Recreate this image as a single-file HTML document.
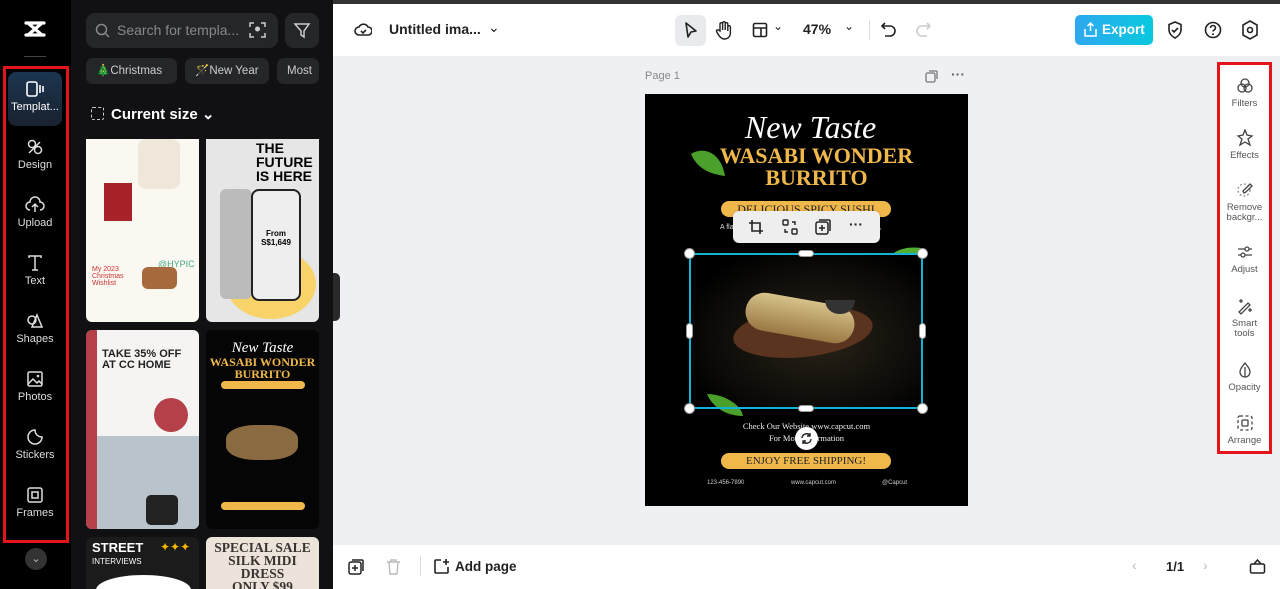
<!DOCTYPE html>
<html style="overflow:hidden;width:1280px;height:589px"><head><meta charset="utf-8"><style>
*{margin:0;padding:0;box-sizing:border-box}
body{width:1280px;height:589px;overflow:hidden;font-family:"Liberation Sans",sans-serif;background:#eef0f3;position:relative}
.abs{position:absolute}
.rail{left:0;top:0;width:71px;height:589px;background:#000}
.panel{left:71px;top:0;width:262px;height:589px;background:#111113}
.topline{left:0;top:0;width:1280px;height:4px;background:#333}
.ri{position:absolute;left:8px;width:54px;height:54px;text-align:center;color:#ddd;font-size:11px}
.ri svg{display:block;margin:8px auto 3px}
.chip{position:absolute;top:58px;height:26px;background:#25262a;border-radius:7px;color:#ccc;font-size:11.5px;line-height:26px;padding:0 10px;white-space:nowrap;overflow:hidden}
.thumb{position:absolute;border-radius:6px;overflow:hidden}
.tb{left:333px;top:4px;width:947px;height:52px;background:#fff}
.bb{left:333px;top:545px;width:947px;height:44px;background:#fff}
.rp{left:1217px;top:62px;width:55px;height:392px;background:#fff;border:3px solid #e4141b}
.rpi{position:absolute;left:0;width:49px;text-align:center;font-size:9.5px;color:#555;line-height:10px}
.rpi svg{display:block;margin:0 auto 4px}
.page{left:645px;top:94px;width:323px;height:412px;background:#000;overflow:hidden}
.gold{color:#f0b84a;font-family:"Liberation Serif",serif;font-weight:bold;text-align:center;position:absolute;width:100%}
.pill{position:absolute;background:#f0b84a;border-radius:9px;color:#222;font-family:"Liberation Serif",serif;text-align:center}
.h{position:absolute;background:#fff;border:1px solid #999}
</style></head><body>
<div class="abs topline"></div>
<div class="abs rail"></div>
<div class="abs panel"></div>
<svg class="abs" style="left:22px;top:18px" width="26" height="22" viewBox="0 0 26 22"><path d="M4 5h18M4 17h18M6 5l14 12M20 5L6 17" stroke="#fff" stroke-width="3.2" fill="none" stroke-linecap="round"/></svg>
<div class="abs" style="left:24px;top:56px;width:22px;height:1px;background:#444"></div>
<div class="abs" style="left:3px;top:66px;width:66px;height:477px;border:3px solid #e4141b"></div>
<div class="ri" style="top:72px;background:linear-gradient(#1b3550,#1a2230);border-radius:8px;color:#fff;height:54px"><svg width="20" height="18" viewBox="0 0 20 18"><rect x="2" y="2" width="10" height="14" rx="2" stroke="#fff" stroke-width="1.6" fill="none"/><path d="M15 5v8M18 6v6" stroke="#fff" stroke-width="1.6"/></svg>Templat...</div>
<div class="ri" style="top:130px"><svg width="18" height="18" viewBox="0 0 18 18"><circle cx="6" cy="6" r="3.5" stroke="#ddd" stroke-width="1.5" fill="none"/><circle cx="12" cy="12" r="3.5" stroke="#ddd" stroke-width="1.5" fill="none"/><path d="M3 15l11-11" stroke="#ddd" stroke-width="1.5"/></svg>Design</div>
<div class="ri" style="top:188px"><svg width="20" height="18" viewBox="0 0 20 18"><path d="M5 14a4 4 0 010-8 5 5 0 0110 0 4 4 0 010 8M10 9v7M7 11l3-3 3 3" stroke="#ddd" stroke-width="1.5" fill="none"/></svg>Upload</div>
<div class="ri" style="top:246px"><svg width="18" height="18" viewBox="0 0 18 18"><path d="M3 4V2h12v2M9 2v14M6 16h6" stroke="#ddd" stroke-width="1.5" fill="none"/></svg>Text</div>
<div class="ri" style="top:304px"><svg width="18" height="18" viewBox="0 0 18 18"><circle cx="6" cy="8" r="4" stroke="#ddd" stroke-width="1.5" fill="none"/><path d="M11 3l5 12H6z" stroke="#ddd" stroke-width="1.5" fill="none"/></svg>Shapes</div>
<div class="ri" style="top:362px"><svg width="18" height="18" viewBox="0 0 18 18"><rect x="2" y="2" width="14" height="14" rx="1.5" stroke="#ddd" stroke-width="1.5" fill="none"/><path d="M2 14l5-5 4 4 2-2 3 3" stroke="#ddd" stroke-width="1.5" fill="none"/><circle cx="12" cy="6" r="1.3" fill="#ddd"/></svg>Photos</div>
<div class="ri" style="top:420px"><svg width="18" height="18" viewBox="0 0 18 18"><path d="M16 9a7 7 0 11-7-7c0 4 3 7 7 7z" stroke="#ddd" stroke-width="1.5" fill="none"/></svg>Stickers</div>
<div class="ri" style="top:478px"><svg width="18" height="18" viewBox="0 0 18 18"><rect x="2" y="2" width="14" height="14" rx="2" stroke="#ddd" stroke-width="1.5" fill="none"/><rect x="6" y="6" width="6" height="6" stroke="#ddd" stroke-width="1.5" fill="none"/></svg>Frames</div>
<div class="abs" style="left:25px;top:548px;width:22px;height:22px;border-radius:50%;background:#333;color:#bbb;font-size:11px;text-align:center;line-height:22px">⌄</div>
<div class="abs" style="left:86px;top:13px;width:192px;height:35px;background:#25262a;border-radius:9px;color:#888;font-size:14px;line-height:35px;padding-left:31px">Search for templa...</div>
<svg class="abs" style="left:95px;top:23px" width="15" height="15"><circle cx="6.5" cy="6.5" r="5" stroke="#888" stroke-width="1.5" fill="none"/><path d="M10 10l4 4" stroke="#888" stroke-width="1.5"/></svg>
<svg class="abs" style="left:249px;top:22px" width="17" height="16"><path d="M1 5V1h4M12 1h4v4M16 11v4h-4M5 15H1v-4" stroke="#ccc" stroke-width="1.5" fill="none"/><circle cx="8.5" cy="7" r="2.5" fill="#ccc"/></svg>
<div class="abs" style="left:285px;top:13px;width:34px;height:35px;background:#25262a;border-radius:9px"></div>
<svg class="abs" style="left:293px;top:22px" width="18" height="17"><path d="M2 2h14l-5 7v6l-3-2V9z" stroke="#ccc" stroke-width="1.5" fill="none"/></svg>
<div class="chip" style="left:86px;width:91px">🎄Christmas</div>
<div class="chip" style="left:185px;width:84px">🪄New Year</div>
<div class="chip" style="left:277px;width:42px">Most</div>
<div class="abs" style="left:91px;top:107px;width:13px;height:13px;border:1.5px dashed #ccc;border-radius:2px"></div>
<div class="abs" style="left:111px;top:105px;color:#fff;font-size:15px;font-weight:bold">Current size ⌄</div>
<div class="thumb" style="left:86px;top:139px;width:113px;height:183px;background:#fbf8f1;border-radius:0 0 6px 6px">
 <div class="abs" style="left:52px;top:0;width:42px;height:50px;background:#efe8da;border-radius:8px"></div>
 <div class="abs" style="left:18px;top:44px;width:28px;height:38px;background:#a8222a"></div>
 <div class="abs" style="left:72px;top:120px;color:#4a8;font-size:9px">@HYPIC</div>
 <div class="abs" style="left:6px;top:127px;color:#c33;font-size:7px;width:40px">My 2023 Christmas Wishlist</div>
 <div class="abs" style="left:56px;top:128px;width:35px;height:22px;background:#a66a3c;border-radius:6px"></div>
</div>
<div class="thumb" style="left:206px;top:139px;width:113px;height:183px;background:#e6e6e6;border-radius:0 0 6px 6px">
 <div class="abs" style="left:50px;top:2px;color:#000;font-size:14px;font-weight:900;line-height:14px">THE<br>FUTURE<br>IS HERE</div>
 <div class="abs" style="left:20px;top:110px;width:90px;height:70px;border-radius:50%;background:#f7d36a"></div>
 <div class="abs" style="left:14px;top:50px;width:32px;height:110px;background:#bbb;border-radius:6px"></div>
 <div class="abs" style="left:45px;top:50px;width:50px;height:112px;background:#eee;border:2px solid #222;border-radius:8px;font-size:8px;font-weight:bold;text-align:center;padding-top:38px">From<br>S$1,649</div>
</div>
<div class="thumb" style="left:86px;top:330px;width:113px;height:199px;background:#f6f4f2">
 <div class="abs" style="left:0;top:0;width:11px;height:199px;background:#b5404a"></div>
 <div class="abs" style="left:11px;top:106px;width:102px;height:93px;background:#b9c3cc"></div>
 <div class="abs" style="left:16px;top:19px;font-size:11px;font-weight:900;color:#222;line-height:11px">TAKE 35% OFF<br>AT CC HOME</div>
 <div class="abs" style="left:68px;top:68px;width:34px;height:34px;border-radius:50%;background:#b5404a"></div>
 <div class="abs" style="left:60px;top:165px;width:32px;height:30px;background:#222;border-radius:5px"></div>
</div>
<div class="thumb" style="left:206px;top:330px;width:113px;height:199px;background:#050505">
 <div class="abs" style="top:10px;width:100%;text-align:center;color:#fff;font-family:'Liberation Serif',serif;font-style:italic;font-size:15px">New Taste</div>
 <div class="gold" style="top:26px;font-size:12px;line-height:12px">WASABI WONDER<br>BURRITO</div>
 <div class="pill" style="left:15px;top:51px;width:84px;height:8px"></div>
 <div class="abs" style="left:20px;top:95px;width:72px;height:35px;border-radius:40%;background:#8a6a40"></div>
 <div class="pill" style="left:15px;top:172px;width:84px;height:8px"></div>
</div>
<div class="thumb" style="left:86px;top:537px;width:113px;height:52px;background:#1b1b1b;border-radius:6px 6px 0 0">
 <div class="abs" style="left:6px;top:5px;color:#fff;font-weight:900;font-size:13px;line-height:12px">STREET<br><span style="font-size:8px;font-weight:normal">INTERVIEWS</span></div>
 <div class="abs" style="left:74px;top:3px;color:#f5b800;font-size:12px">✦✦✦</div>
 <div class="abs" style="left:10px;top:38px;width:95px;height:30px;background:#fff;border-radius:50%"></div>
</div>
<div class="thumb" style="left:206px;top:537px;width:113px;height:52px;background:#ece3da;border-radius:6px 6px 0 0">
 <div class="abs" style="top:4px;width:100%;text-align:center;font-family:'Liberation Serif',serif;font-weight:bold;font-size:13.5px;line-height:13px;color:#3a3330">SPECIAL SALE<br>SILK MIDI DRESS<br>ONLY $99</div>
</div>
<div class="abs" style="left:333px;top:273px;width:7px;height:48px;background:#2a2a2a;border-radius:0 5px 5px 0"></div>
<div class="abs tb"></div>
<svg class="abs" style="left:354px;top:21px" width="18" height="17"><path d="M5 14a4 4 0 010-8 5 5 0 019 0 4 4 0 010 8z" stroke="#222" stroke-width="1.6" fill="none"/><path d="M7 10l2 2 3-3" stroke="#222" stroke-width="1.6" fill="none"/></svg>
<div class="abs" style="left:389px;top:21px;font-size:14px;font-weight:bold;color:#222">Untitled ima...</div>
<div class="abs" style="left:488px;top:19px;font-size:14px;color:#222">⌄</div>
<div class="abs" style="left:675px;top:15px;width:31px;height:31px;background:#e8eaee;border-radius:6px"></div>
<svg class="abs" style="left:683px;top:21px" width="16" height="18"><path d="M3 2l10 8-5 1-3 5z" stroke="#222" stroke-width="1.6" fill="none" stroke-linejoin="round"/></svg>
<svg class="abs" style="left:715px;top:20px" width="18" height="20"><path d="M5 11V4a1.3 1.3 0 012.6 0v6V3a1.3 1.3 0 012.6 0v7V4a1.3 1.3 0 012.6 0v7-4a1.3 1.3 0 012.6 0v6c0 4-3 6-6 6s-5-2-7-6l-1-2a1.3 1.3 0 012-1z" stroke="#222" stroke-width="1.4" fill="none"/></svg>
<svg class="abs" style="left:752px;top:22px" width="16" height="16"><rect x="1.5" y="1.5" width="13" height="13" rx="1.5" stroke="#222" stroke-width="1.6" fill="none"/><path d="M1.5 6h13M9 6v8.5" stroke="#222" stroke-width="1.6"/></svg>
<div class="abs" style="left:773px;top:19px;font-size:12px;color:#222">⌄</div>
<div class="abs" style="left:803px;top:21px;font-size:14px;font-weight:bold;color:#222">47%</div>
<div class="abs" style="left:844px;top:19px;font-size:12px;color:#222">⌄</div>
<div class="abs" style="left:869px;top:20px;width:1px;height:20px;background:#ddd"></div>
<svg class="abs" style="left:881px;top:21px" width="16" height="17"><path d="M4 2L1 5l3 3M1 5h8a5 5 0 010 10H4" stroke="#222" stroke-width="1.6" fill="none"/></svg>
<svg class="abs" style="left:915px;top:21px" width="16" height="17"><path d="M12 2l3 3-3 3M15 5H7a5 5 0 000 10h5" stroke="#ccc" stroke-width="1.6" fill="none"/></svg>
<div class="abs" style="left:1075px;top:15px;width:78px;height:30px;border-radius:5px;background:linear-gradient(90deg,#2fa8f0,#08c9de);color:#fff;font-size:13.5px;font-weight:bold;line-height:30px;padding-left:27px">Export</div>
<svg class="abs" style="left:1084px;top:22px" width="13" height="15"><path d="M6.5 9V1M3.5 4l3-3 3 3M1 7v7h11V7" stroke="#fff" stroke-width="1.5" fill="none"/></svg>
<svg class="abs" style="left:1167px;top:21px" width="16" height="18"><path d="M8 1l6 2.5v5c0 4-3 7-6 8.5-3-1.5-6-4.5-6-8.5v-5z M5 9l2 2 4-4" stroke="#222" stroke-width="1.6" fill="none"/></svg>
<svg class="abs" style="left:1204px;top:21px" width="18" height="18"><circle cx="9" cy="9" r="7.5" stroke="#222" stroke-width="1.6" fill="none"/><path d="M6.5 7a2.5 2.5 0 115 0c0 1.7-2.5 2-2.5 3.5" stroke="#222" stroke-width="1.6" fill="none"/><circle cx="9" cy="13.3" r="1" fill="#222"/></svg>
<svg class="abs" style="left:1241px;top:20px" width="18" height="20"><path d="M9 1l7 4v10l-7 4-7-4V5z" stroke="#222" stroke-width="1.6" fill="none"/><circle cx="9" cy="10" r="2.5" stroke="#222" stroke-width="1.6" fill="none"/></svg>
<div class="abs" style="left:645px;top:70px;font-size:11px;color:#888">Page 1</div>
<svg class="abs" style="left:925px;top:70px" width="13" height="13"><rect x="1" y="3" width="9" height="9" rx="1.5" stroke="#777" stroke-width="1.3" fill="none"/><path d="M4 1h7a1 1 0 011 1v7" stroke="#777" stroke-width="1.3" fill="none"/></svg>
<div class="abs" style="left:951px;top:66px;font-size:14px;color:#666;font-weight:bold">···</div>
<div class="abs page">
 <div class="abs" style="top:16px;width:100%;text-align:center;color:#fff;font-family:'Liberation Serif',serif;font-style:italic;font-size:32px;line-height:34px;padding-left:8px">New Taste</div>
 <div class="gold" style="top:51px;font-size:22px;line-height:22px;padding-left:20px">WASABI WONDER</div>
 <div class="gold" style="top:73px;font-size:22px;line-height:22px;padding-left:20px">BURRITO</div>
 <svg class="abs" style="left:44px;top:50px" width="40" height="36"><path d="M2 10c12-8 30-2 34 22C20 30 8 24 2 10z" fill="#4aa02a"/></svg>
 <div class="pill" style="left:76px;top:107px;width:170px;height:16px;font-size:12px;line-height:16px;overflow:hidden">DELICIOUS SPICY SUSHI</div>
 <div class="abs" style="left:75px;top:130px;color:#ddd;font-size:7px">A fla</div>
 <div class="abs" style="left:225px;top:130px;color:#ddd;font-size:7px">ner,</div>
 <svg class="abs" style="left:236px;top:150px" width="42" height="26"><path d="M2 24C8 6 24 2 40 4 34 18 20 26 2 24z" fill="#52b030"/></svg>
 <div class="abs" style="left:45px;top:160px;width:232px;height:154px;background:radial-gradient(ellipse at 55% 55%,#2a2418 0%,#0b0a08 60%,#000 80%)"></div>
 <div class="abs" style="left:88px;top:213px;width:140px;height:50px;border-radius:50%;background:#5b3420;transform:rotate(-6deg)"></div>
 <div class="abs" style="left:100px;top:205px;width:110px;height:38px;border-radius:20px;background:linear-gradient(#d6c28a,#9a7844);transform:rotate(10deg)"></div>
 <div class="abs" style="left:180px;top:206px;width:30px;height:14px;border-radius:0 0 15px 15px;background:#333"></div>
 <svg class="abs" style="left:60px;top:298px" width="40" height="26"><path d="M2 2c16 0 34 10 36 22C22 24 8 16 2 2z" fill="#4aa02a"/></svg>
 <div class="abs" style="top:326px;width:100%;text-align:center;color:#eee;font-family:'Liberation Serif',serif;font-size:8.5px;line-height:12px">Check Our Website www.capcut.com<br>For More Information</div>
 <div class="pill" style="left:76px;top:359px;width:170px;height:16px;font-size:11px;line-height:16px">ENJOY FREE SHIPPING!</div>
 <div class="abs" style="left:62px;top:386px;color:#ccc;font-size:6px">123-456-7890</div>
 <div class="abs" style="left:146px;top:386px;color:#ccc;font-size:6px">www.capcut.com</div>
 <div class="abs" style="left:237px;top:386px;color:#ccc;font-size:6px">@Capcut</div>
</div>
<div class="abs" style="left:733px;top:211px;width:147px;height:32px;background:#eeeeee;border-radius:6px;box-shadow:0 1px 4px rgba(0,0,0,.2)"></div>
<svg class="abs" style="left:748px;top:219px" width="16" height="16"><path d="M4 1v11h11M1 4h11v11" stroke="#222" stroke-width="1.6" fill="none"/></svg>
<svg class="abs" style="left:782px;top:219px" width="16" height="16"><rect x="1" y="1" width="5" height="5" rx="1" stroke="#222" stroke-width="1.4" fill="none"/><rect x="10" y="10" width="5" height="5" rx="1" stroke="#222" stroke-width="1.4" fill="none"/><path d="M10 3h3v3M6 13H3v-3" stroke="#222" stroke-width="1.4" fill="none"/></svg>
<svg class="abs" style="left:815px;top:219px" width="16" height="16"><rect x="1" y="3" width="12" height="12" rx="2" stroke="#222" stroke-width="1.5" fill="none"/><path d="M4 1h10a1 1 0 011 1v10M7 6v6M4 9h6" stroke="#222" stroke-width="1.5" fill="none"/></svg>
<div class="abs" style="left:849px;top:216px;font-size:14px;font-weight:bold;color:#222">···</div>
<div class="abs" style="left:689px;top:253px;width:234px;height:156px;border:2px solid #12b3d6"></div>
<div class="h" style="left:684px;top:248px;width:11px;height:11px;border-radius:50%"></div>
<div class="h" style="left:917px;top:248px;width:11px;height:11px;border-radius:50%"></div>
<div class="h" style="left:684px;top:403px;width:11px;height:11px;border-radius:50%"></div>
<div class="h" style="left:917px;top:403px;width:11px;height:11px;border-radius:50%"></div>
<div class="h" style="left:798px;top:250px;width:16px;height:7px;border-radius:4px"></div>
<div class="h" style="left:798px;top:405px;width:16px;height:7px;border-radius:4px"></div>
<div class="h" style="left:686px;top:323px;width:7px;height:16px;border-radius:4px"></div>
<div class="h" style="left:919px;top:323px;width:7px;height:16px;border-radius:4px"></div>
<div class="abs" style="left:795px;top:427px;width:23px;height:23px;border-radius:50%;background:#fff;box-shadow:0 1px 3px rgba(0,0,0,.3)"></div>
<svg class="abs" style="left:800px;top:432px" width="13" height="13"><path d="M2 6a4.5 4.5 0 018-2.5M11 7a4.5 4.5 0 01-8 2.5M10 1v3H7M3 12V9h3" stroke="#222" stroke-width="1.4" fill="none"/></svg>
<div class="abs rp">
 <div class="rpi" style="top:12px"><svg width="18" height="18"><circle cx="9" cy="6" r="4" stroke="#444" stroke-width="1.3" fill="none"/><circle cx="6" cy="11" r="4" stroke="#444" stroke-width="1.3" fill="none"/><circle cx="12" cy="11" r="4" stroke="#444" stroke-width="1.3" fill="none"/></svg>Filters</div>
 <div class="rpi" style="top:64px"><svg width="18" height="18"><path d="M9 1l2 5 5 1-4 3 2 6-5-3-5 3 2-6-4-3 5-1z" stroke="#444" stroke-width="1.3" fill="none"/></svg>Effects</div>
 <div class="rpi" style="top:116px"><svg width="18" height="18"><circle cx="8" cy="9" r="6" stroke="#888" stroke-width="1.2" stroke-dasharray="2 2" fill="none"/><path d="M14 3l-7 7 1 2 2-1 6-6z" stroke="#444" stroke-width="1.3" fill="none"/></svg>Remove<br>backgr...</div>
 <div class="rpi" style="top:178px"><svg width="18" height="18"><path d="M2 6h14M2 12h14" stroke="#444" stroke-width="1.3"/><circle cx="11" cy="6" r="2" fill="#fff" stroke="#444" stroke-width="1.3"/><circle cx="7" cy="12" r="2" fill="#fff" stroke="#444" stroke-width="1.3"/></svg>Adjust</div>
 <div class="rpi" style="top:232px"><svg width="18" height="18"><path d="M3 15l9-9 2 2-9 9zM5 2v4M3 4h4M14 11v4M12 13h4" stroke="#444" stroke-width="1.3" fill="none"/></svg>Smart<br>tools</div>
 <div class="rpi" style="top:296px"><svg width="18" height="18"><path d="M9 2c3 4 5 6 5 9a5 5 0 01-10 0c0-3 2-5 5-9zM9 6v10" stroke="#444" stroke-width="1.3" fill="none"/></svg>Opacity</div>
 <div class="rpi" style="top:349px"><svg width="18" height="18"><rect x="2" y="2" width="14" height="14" rx="2" stroke="#444" stroke-width="1.3" stroke-dasharray="3 2.5" fill="none"/><rect x="6" y="6" width="6" height="6" rx="1" stroke="#444" stroke-width="1.3" fill="none"/></svg>Arrange</div>
</div>
<div class="abs bb"></div>
<svg class="abs" style="left:348px;top:559px" width="16" height="16"><rect x="1" y="3" width="12" height="12" rx="2" stroke="#222" stroke-width="1.5" fill="none"/><path d="M4 1h10a1 1 0 011 1v10M7 6v6M4 9h6" stroke="#222" stroke-width="1.5" fill="none"/></svg>
<svg class="abs" style="left:386px;top:559px" width="15" height="16"><path d="M1 3h13M5 3V1h5v2M3 3l1 12h7l1-12" stroke="#bbb" stroke-width="1.4" fill="none"/></svg>
<div class="abs" style="left:420px;top:556px;width:1px;height:20px;background:#ddd"></div>
<svg class="abs" style="left:433px;top:558px" width="17" height="17"><path d="M8 2H3a1 1 0 00-1 1v11a1 1 0 001 1h11a1 1 0 001-1V9M13 1v6M10 4h6" stroke="#222" stroke-width="1.6" fill="none"/></svg>
<div class="abs" style="left:455px;top:559px;font-size:13.5px;font-weight:bold;color:#222">Add page</div>
<div class="abs" style="left:1132px;top:557px;font-size:14px;color:#bbb">‹</div>
<div class="abs" style="left:1166px;top:559px;font-size:13px;font-weight:bold;color:#222">1/1</div>
<div class="abs" style="left:1203px;top:557px;font-size:14px;color:#bbb">›</div>
<svg class="abs" style="left:1249px;top:558px" width="17" height="17"><rect x="1.5" y="6" width="14" height="9" rx="1.5" stroke="#222" stroke-width="1.5" fill="none"/><path d="M5 6l3.5-4L12 6" stroke="#222" stroke-width="1.5" fill="none"/></svg>
</body></html>
